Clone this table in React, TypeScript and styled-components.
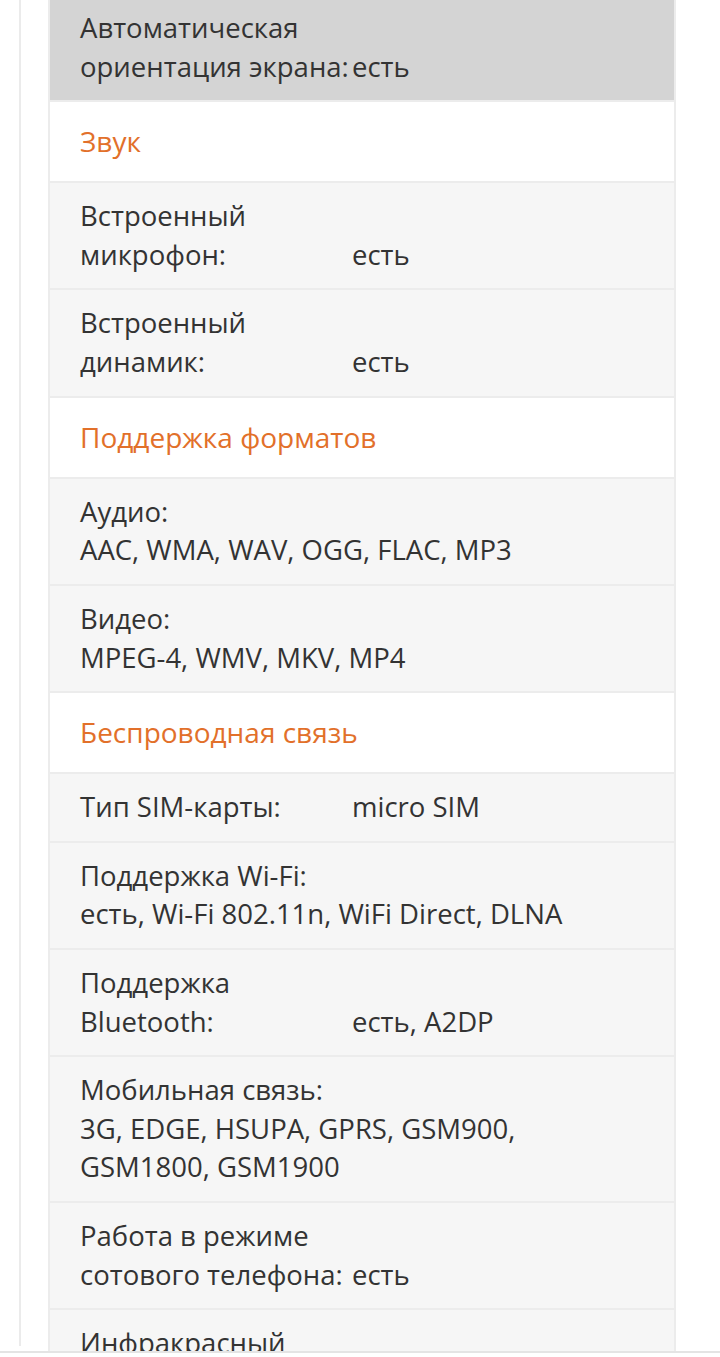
import React from "react";
import styled, { createGlobalStyle } from "styled-components";

const GlobalStyle = createGlobalStyle`
  html, body {
    margin: 0;
    padding: 0;
    background: #ffffff;
  }
  body {
    font-family: "Open Sans", "Noto Sans", "DejaVu Sans", sans-serif;
    color: #333333;
  }
`;

const Screen = styled.div`
  width: 720px;
  height: 1357px;
  display: flex;
  flex-direction: column;
  overflow: hidden;
  background: #ffffff;
`;

const Viewport = styled.div`
  flex: 0 0 1351px;
  overflow: hidden;
  padding-left: 19px;
`;

const Panel = styled.div`
  width: 679px;
  height: 100%;
  border-left: 2px solid #ebebeb;
  border-right: 2px solid #ebebeb;
  padding-left: 27px;
`;

const SpecTable = styled.div`
  width: 624px;
  margin-top: -5px;
  border-left: 2px solid #ececec;
  border-right: 2px solid #ececec;
  display: flex;
  flex-direction: column;
`;

const SectionHead = styled.div`
  background: #ffffff;
  border-bottom: 2px solid #ececec;
  padding: 20px 30px 20.5px;
  font-size: 28px;
  line-height: 38.6px;
  color: #e2702a;
`;

const Row = styled.div<{ $active?: boolean }>`
  background: ${(p) => (p.$active ? "#d4d4d4" : "#f6f6f6")};
  border-bottom: 2px solid #ececec;
  padding: 14px 30px;
  font-size: 27.5px;
  line-height: 38.6px;
  color: #333333;
`;

const Label = styled.span`
  display: inline-block;
  width: 272px;
  vertical-align: baseline;
`;

const Value = styled.span`
  display: inline-block;
  max-width: 550px;
  vertical-align: baseline;
`;

const BottomBar = styled.div`
  flex: 0 0 6px;
  border-top: 2px solid #e4e4e4;
  background: #ffffff;
`;

type Item =
  | { kind: "head"; title: string }
  | { kind: "row"; label: string; value: string; active?: boolean };

const items: Item[] = [
  { kind: "row", label: "Автоматическая ориентация экрана:", value: "есть", active: true },
  { kind: "head", title: "Звук" },
  { kind: "row", label: "Встроенный микрофон:", value: "есть" },
  { kind: "row", label: "Встроенный динамик:", value: "есть" },
  { kind: "head", title: "Поддержка форматов" },
  { kind: "row", label: "Аудио:", value: "AAC, WMA, WAV, OGG, FLAC, MP3" },
  { kind: "row", label: "Видео:", value: "MPEG-4, WMV, MKV, MP4" },
  { kind: "head", title: "Беспроводная связь" },
  { kind: "row", label: "Тип SIM-карты:", value: "micro SIM" },
  { kind: "row", label: "Поддержка Wi-Fi:", value: "есть, Wi-Fi 802.11n, WiFi Direct, DLNA" },
  { kind: "row", label: "Поддержка Bluetooth:", value: "есть, A2DP" },
  { kind: "row", label: "Мобильная связь:", value: "3G, EDGE, HSUPA, GPRS, GSM900, GSM1800, GSM1900" },
  { kind: "row", label: "Работа в режиме сотового телефона:", value: "есть" },
  { kind: "row", label: "Инфракрасный порт:", value: "нет" },
];

export default function App() {
  return (
    <>
      <GlobalStyle />
      <Screen>
        <Viewport>
          <Panel>
            <SpecTable>
              {items.map((it, i) =>
                it.kind === "head" ? (
                  <SectionHead key={i}>{it.title}</SectionHead>
                ) : (
                  <Row key={i} $active={it.active}>
                    <Label>{it.label}</Label>
                    <Value>{it.value}</Value>
                  </Row>
                )
              )}
            </SpecTable>
          </Panel>
        </Viewport>
        <BottomBar />
      </Screen>
    </>
  );
}
